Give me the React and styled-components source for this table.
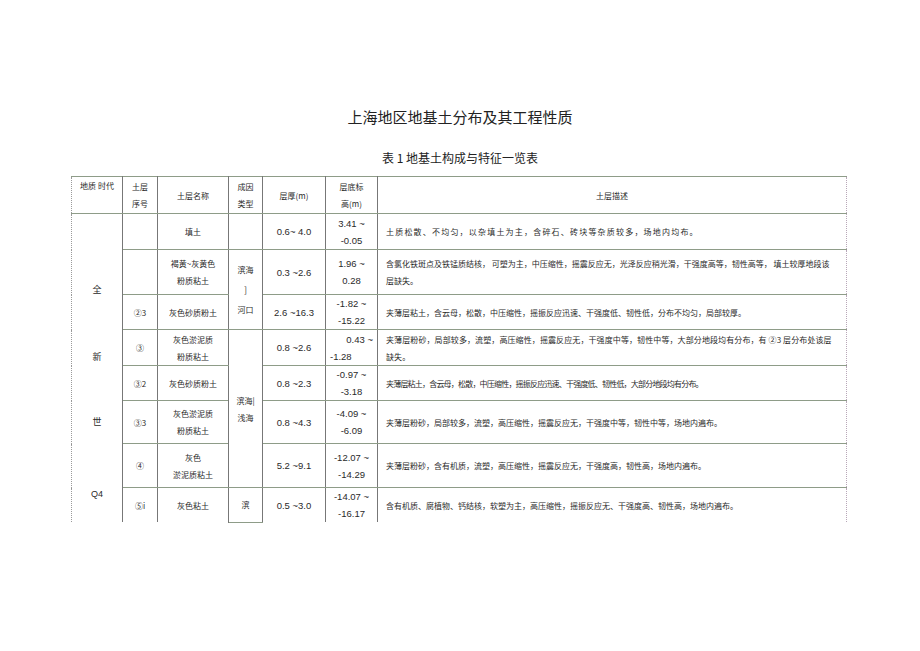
import React from "react";
import styled, { createGlobalStyle } from "styled-components";

const GlobalStyle = createGlobalStyle`
  html, body { margin: 0; padding: 0; background: #ffffff; }
  * { box-sizing: border-box; }
`;

const CJK = `"Noto Sans CJK SC", "Noto Sans", sans-serif`;
const NUM = `"Liberation Sans", Arial, "Noto Sans CJK SC", sans-serif`;

const Page = styled.div`
  width: 920px;
  height: 651px;
  overflow: hidden;
  padding-top: 107px;
  background: #fff;
  color: #1e1e1e;
  font-family: ${CJK};
`;

const Title = styled.h1`
  margin: 0;
  text-align: center;
  font-size: 15px;
  line-height: 20px;
  font-weight: 400;
  color: #222;
`;

const Subtitle = styled.h2`
  margin: 23px 0 0;
  text-align: center;
  font-size: 12px;
  line-height: 16px;
  font-weight: 400;
  color: #222;
`;

const TableWrap = styled.div`
  margin: 10px 0 0 71px;
`;

const Table = styled.table`
  border-collapse: collapse;
  table-layout: fixed;
  width: 775px;
  font-size: 8px;
  line-height: 17px;
  color: #2a2a2a;
`;

const Col = styled.col`
  width: ${(p) => p.$w}px;
`;

const Row = styled.tr`
  height: ${(p) => p.$h}px;
`;

const Cell = styled.td`
  padding: 0;
  text-align: ${(p) => p.$align || "center"};
  vertical-align: ${(p) => p.$valign || "middle"};
  font-family: ${(p) => (p.$num ? NUM : CJK)};
  font-size: ${(p) => (p.$num ? "9.5px" : "8px")};
  font-weight: 400;
  padding-left: ${(p) => p.$pl || 0}px;
  letter-spacing: ${(p) => p.$ls || 0}px;
  white-space: nowrap;
  border-top: 1px ${(p) => p.$top || "solid"} #8e9c88;
  border-bottom: ${(p) => (p.$noBottom ? "none" : "1px solid #8e9c88")};
  border-left: 1px ${(p) => (p.$first ? "dotted" : "solid")} ${(p) => (p.$first ? "#9a9a9a" : "#777")};
  border-right: 1px ${(p) => (p.$last ? "dotted" : "solid")} ${(p) => (p.$last ? "#b8a7b8" : "#777")};
`;

const HeadCell = styled(Cell).attrs({ as: "th" })`
  font-weight: 400;
`;

const Line = styled.div`
  text-align: ${(p) => p.$align || "inherit"};
  padding: ${(p) => (p.$align === "right" ? "0 4px 0 0" : p.$align === "left" ? "0 0 0 4px" : "0")};
`;

const EraStack = styled.div`
  display: flex;
  flex-direction: column;
  align-items: center;
  line-height: 18px;
  font-size: 9px;
`;

const EraItem = styled.div`
  margin-top: ${(p) => p.$mt}px;
  font-family: ${(p) => (p.$num ? NUM : CJK)};
`;

const GenesisLines = styled.div`
  line-height: ${(p) => p.$lh}px;
`;

const Lines = ({ items }) =>
  items.map((it, i) =>
    typeof it === "string" ? (
      <Line key={i}>{it}</Line>
    ) : (
      <Line key={i} $align={it.a}>
        {it.t}
      </Line>
    )
  );

const colWidths = [51, 35, 71, 34, 63, 52, 469];

const era = [
  { t: "全", mt: 67 },
  { t: "新", mt: 49 },
  { t: "世", mt: 47 },
  { t: "Q4", mt: 54, num: true },
];

const rows = [
  {
    h: 36,
    no: "",
    name: ["填土"],
    gen: { lines: [], span: 1 },
    thick: "0.6~ 4.0",
    elev: ["3.41 ~", "-0.05"],
    desc: ["土质松散、不均匀，以杂填土为主，含碎石、砖块等杂质较多，场地内均布。"],
    ls: 1.2,
  },
  {
    h: 45,
    no: "",
    name: ["褐黄~灰黄色", "粉质粘土"],
    gen: { lines: ["滨海", "]", "河口"], span: 2, lh: 20 },
    thick: "0.3 ~2.6",
    elev: ["1.96 ~", "0.28"],
    desc: [
      "含氯化铁斑点及铁锰质结核， 可塑为主，中压缩性，摇震反应无，光泽反应稍光滑，干强度高等，韧性高等， 填土较厚地段该",
      "层缺失。",
    ],
    top: "dotted",
    ls: 0,
  },
  {
    h: 35,
    no: "②3",
    name: ["灰色砂质粉土"],
    gen: null,
    thick: "2.6 ~16.3",
    elev: ["-1.82 ~", "-15.22"],
    desc: ["夹薄层粘土，含云母，松散，中压缩性，摇振反应迅速、干强度低、韧性低，分布不均匀，局部较厚。"],
    ls: 0,
  },
  {
    h: 36,
    no: "③",
    name: ["灰色淤泥质", "粉质粘土"],
    gen: { lines: ["滨海|", "浅海"], span: 4, lh: 17 },
    thick: "0.8 ~2.6",
    elev: [{ t: "0.43 ~", a: "right" }, { t: "-1.28", a: "left" }],
    desc: [
      "夹薄层粉砂，局部较多，流塑，高压缩性，摇震反应无，干强度中等，韧性中等，大部分地段均有分布，有 ②3 层分布处该层",
      "缺失。",
    ],
    ls: 0.1,
  },
  {
    h: 35,
    no: "③2",
    name: ["灰色砂质粉土"],
    gen: null,
    thick: "0.8 ~2.3",
    elev: ["-0.97 ~", "-3.18"],
    desc: ["夹薄层粘土，含云母，松散，中压缩性，摇振反应迅速、干强度低、韧性低，大部分地段均有分布。"],
    ls: -0.8,
  },
  {
    h: 43,
    no: "③3",
    name: ["灰色淤泥质", "粉质粘土"],
    gen: null,
    thick: "0.8 ~4.3",
    elev: ["-4.09 ~", "-6.09"],
    desc: ["夹薄层粉砂，局部较多，流塑，高压缩性，摇震反应无，干强度中等，韧性中等，场地内遍布。"],
    top: "dotted",
    ls: 0,
  },
  {
    h: 44,
    no: "④",
    name: ["灰色", "淤泥质粘土"],
    gen: null,
    thick: "5.2 ~9.1",
    elev: ["-12.07 ~", "-14.29"],
    desc: ["夹薄层粉砂，含有机质，流塑，高压缩性，摇震反应无，干强度高，韧性高，场地内遍布。"],
    ls: 0,
  },
  {
    h: 34,
    no: "⑤i",
    name: ["灰色粘土"],
    gen: { lines: ["滨"], span: 1, lh: 17 },
    thick: "0.5 ~3.0",
    elev: ["-14.07 ~", "-16.17"],
    desc: ["含有机质、腐植物、钙结核，软塑为主，高压缩性，摇振反应无、干强度高、韧性高，场地内遍布。"],
    top: "dotted",
    ls: 0,
    lastRow: true,
  },
];

export default function App() {
  return (
    <>
      <GlobalStyle />
      <Page>
        <Title>上海地区地基土分布及其工程性质</Title>
        <Subtitle>表 1 地基土构成与特征一览表</Subtitle>
        <TableWrap>
          <Table>
            <colgroup>
              {colWidths.map((w, i) => (
                <Col key={i} $w={w} />
              ))}
            </colgroup>
            <thead>
              <Row $h={37}>
                <HeadCell $first $valign="top">
                  <Line>地质 时代</Line>
                </HeadCell>
                <HeadCell>
                  <Lines items={["土层", "序号"]} />
                </HeadCell>
                <HeadCell>土层名称</HeadCell>
                <HeadCell>
                  <Lines items={["成因", "类型"]} />
                </HeadCell>
                <HeadCell>层厚(m)</HeadCell>
                <HeadCell>
                  <Lines items={["层底标", "高(m)"]} />
                </HeadCell>
                <HeadCell $last>土层描述</HeadCell>
              </Row>
            </thead>
            <tbody>
              {rows.map((r, i) => (
                <Row key={i} $h={r.h}>
                  {i === 0 && (
                    <Cell $first rowSpan={rows.length} $valign="top" $noBottom>
                      <EraStack>
                        {era.map((e) => (
                          <EraItem key={e.t} $mt={e.mt} $num={e.num}>
                            {e.t}
                          </EraItem>
                        ))}
                      </EraStack>
                    </Cell>
                  )}
                  <Cell $top={r.top} $noBottom={r.lastRow}>
                    {r.no}
                  </Cell>
                  <Cell $top={r.top} $noBottom={r.lastRow}>
                    <Lines items={r.name} />
                  </Cell>
                  {r.gen && (
                    <Cell rowSpan={r.gen.span} $top={r.top}>
                      <GenesisLines $lh={r.gen.lh || 17}>
                        <Lines items={r.gen.lines} />
                      </GenesisLines>
                    </Cell>
                  )}
                  <Cell $num $top={r.top} $noBottom={r.lastRow}>
                    {r.thick}
                  </Cell>
                  <Cell $num $top={r.top} $noBottom={r.lastRow}>
                    <Lines items={r.elev} />
                  </Cell>
                  <Cell
                    $last
                    $align="left"
                    $pl={8}
                    $ls={r.ls}
                    $top={r.top}
                    $noBottom={r.lastRow}
                  >
                    <Lines items={r.desc} />
                  </Cell>
                </Row>
              ))}
            </tbody>
          </Table>
        </TableWrap>
      </Page>
    </>
  );
}
